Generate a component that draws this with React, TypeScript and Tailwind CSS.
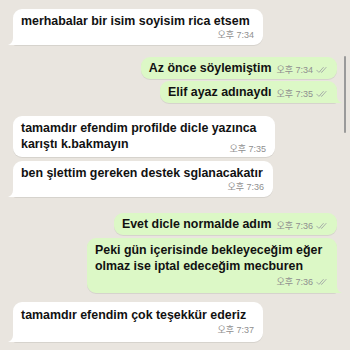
import React from 'react';

type Side = 'in' | 'out';

const TEXT_FONT = { fontFamily: '"Liberation Sans", Arial, sans-serif' };
const TIME_FONT = { fontFamily: '"Liberation Sans", "Noto Sans CJK KR", sans-serif' };

const Ticks = () => (
  <svg width="11" height="8" viewBox="0 0 12 8" className="ml-[3px] shrink-0">
    <path d="M0.8 4.2 L3.2 6.6 L8 1.2" fill="none" stroke="#a3a8a6" strokeWidth="1" strokeLinecap="round" strokeLinejoin="round" />
    <path d="M5.4 5.9 L6.2 6.6 L11 1.2" fill="none" stroke="#a3a8a6" strokeWidth="1" strokeLinecap="round" strokeLinejoin="round" />
  </svg>
);

const Time = ({ value, ticks = false }: { value: string; ticks?: boolean }) => (
  <span className="flex items-center text-[9px] leading-[12px] text-[#8f8f8f] whitespace-nowrap" style={TIME_FONT}>
    오후 {value}
    {ticks && <Ticks />}
  </span>
);

const Tail = ({ side }: { side: Side }) =>
  side === 'in' ? (
    <svg width="9" height="12" viewBox="0 0 9 12" className="absolute left-[-5px] bottom-0">
      <path d="M9 0 V12 H0 C3 11 5 8.5 5 5 V0 Z" fill="#ffffff" />
    </svg>
  ) : (
    <svg width="9" height="12" viewBox="0 0 9 12" className="absolute right-[-5px] bottom-0">
      <path d="M0 0 V12 H9 C6 11 4 8.5 4 5 V0 Z" fill="#dcf8c6" />
    </svg>
  );

interface BubbleProps {
  side: Side;
  width?: string;
  mt: string;
  tail?: boolean;
  children: React.ReactNode;
}

const Bubble = ({ side, width = '', mt, tail = false, children }: BubbleProps) => {
  const base = side === 'in' ? 'self-start ml-[13px] bg-white' : 'self-end mr-[13px] bg-[#dcf8c6]';
  const corner = tail ? (side === 'in' ? 'rounded-[9px] rounded-bl-[3px]' : 'rounded-[9px] rounded-br-[3px]') : 'rounded-[9px]';
  return (
    <div className={`relative ${base} ${corner} ${width} ${mt} shadow-[0_1px_0.5px_rgba(0,0,0,0.08)]`}>
      {children}
      {tail && <Tail side={side} />}
    </div>
  );
};

const Line = ({ children }: { children: React.ReactNode }) => (
  <div className="text-[12.4px] leading-[16px] font-bold text-[#111111] whitespace-nowrap" style={TEXT_FONT}>
    {children}
  </div>
);

// single-line outgoing message, time sits beside the text
const InlineOut = ({ text, time, mt, tail = false }: { text: string; time: string; mt: string; tail?: boolean }) => (
  <Bubble side="out" mt={mt} tail={tail}>
    <div className="pl-[8px] pr-[10px] py-[3px] flex items-end gap-[5px]">
      <Line>{text}</Line>
      <Time value={time} ticks />
    </div>
  </Bubble>
);

export default function App() {
  return (
    <div className="relative w-[350px] h-[350px] overflow-hidden bg-[#e9e5df] flex flex-col pt-[9px]">
      <Bubble side="in" width="w-[250px]" mt="mt-0" tail>
        <div className="pl-[8px] pr-[9px] pt-[4px] pb-[4px]">
          <Line>merhabalar bir isim soyisim rica etsem</Line>
          <div className="flex justify-end">
            <Time value="7:34" />
          </div>
        </div>
      </Bubble>

      <InlineOut text="Az önce söylemiştim" time="7:34" mt="mt-[12px]" />
      <InlineOut text="Elif ayaz adınaydı" time="7:35" mt="mt-[2px]" tail />

      <Bubble side="in" width="w-[262px]" mt="mt-[13px]">
        <div className="pl-[8px] pr-[9px] pt-[4px] pb-[5px]">
          <Line>tamamdır efendim profilde dicle yazınca</Line>
          <div className="flex justify-between items-end">
            <Line>karıştı k.bakmayın</Line>
            <div className="translate-y-[3px]">
              <Time value="7:35" />
            </div>
          </div>
        </div>
      </Bubble>

      <Bubble side="in" width="w-[260px]" mt="mt-[4px]" tail>
        <div className="pl-[8px] pr-[9px] pt-[4px] pb-[4px]">
          <Line>ben şlettim gereken destek sglanacakatır</Line>
          <div className="flex justify-end">
            <Time value="7:36" />
          </div>
        </div>
      </Bubble>

      <InlineOut text="Evet dicle normalde adım" time="7:36" mt="mt-[16px]" />

      <Bubble side="out" width="w-[250px]" mt="mt-[3px]" tail>
        <div className="pl-[8px] pr-[10px] pt-[4px] pb-[5px]">
          <Line>Peki gün içerisinde bekleyeceğim eğer</Line>
          <Line>olmaz ise iptal edeceğim mecburen</Line>
          <div className="flex justify-end mt-[2px]">
            <Time value="7:36" ticks />
          </div>
        </div>
      </Bubble>

      <Bubble side="in" width="w-[250px]" mt="mt-[9px]" tail>
        <div className="pl-[8px] pr-[9px] pt-[5px] pb-[6px]">
          <Line>tamamdır efendim çok teşekkür ederiz</Line>
          <div className="flex justify-end mt-[1px]">
            <Time value="7:37" />
          </div>
        </div>
      </Bubble>

      <div className="absolute right-[4px] top-[56px] w-[2px] h-[77px] rounded-full bg-[#9a9a9a]" />
    </div>
  );
}
